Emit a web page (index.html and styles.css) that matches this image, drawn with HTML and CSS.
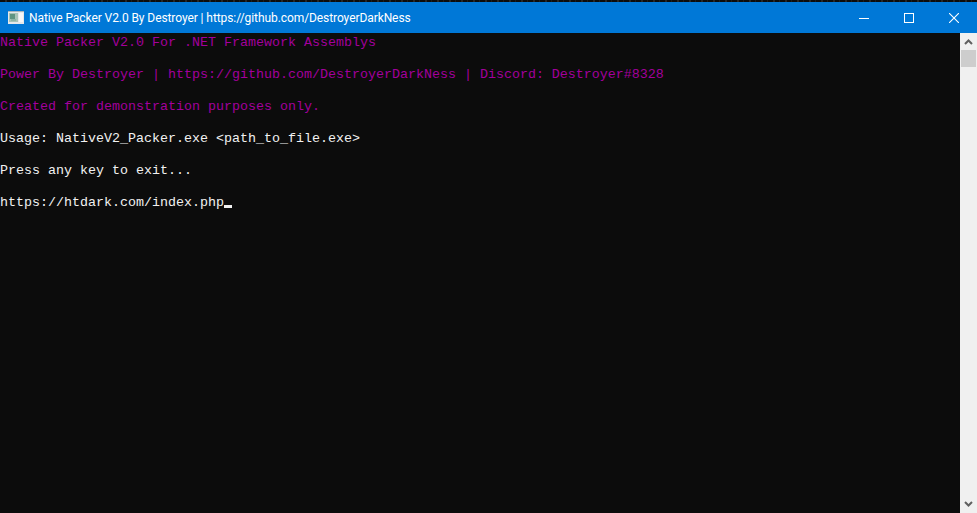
FILE: index.html
```html
<!DOCTYPE html>
<html lang="en">
<head>
<meta charset="utf-8">
<title>Native Packer V2.0</title>
<link rel="stylesheet" href="styles.css">
</head>
<body>
<div class="window">
  <header class="titlebar">
    <svg class="app-icon" width="16" height="13" viewBox="0 0 16 13">
      <rect x="0" y="0" width="16" height="13" fill="#e4e8ea"/>
      <rect x="0" y="0" width="16" height="1" fill="#a9b4bb"/>
      <rect x="1" y="2" width="9" height="9" fill="#a8c4b8"/>
      <rect x="2" y="3" width="5" height="5" fill="#5f9482"/>
      <rect x="3" y="8" width="5" height="2" fill="#8fb5a6"/>
      <rect x="11" y="2" width="4" height="9" fill="#f6f6f6"/>
    </svg>
    <span class="title">Native Packer V2.0 By Destroyer | https://github.com/DestroyerDarkNess</span>
    <div class="controls">
      <div class="ctrl"><svg width="10" height="10" viewBox="0 0 10 10"><rect x="0" y="5" width="10" height="1" fill="#fff"/></svg></div>
      <div class="ctrl"><svg width="10" height="10" viewBox="0 0 10 10"><rect x="0.5" y="0.5" width="9" height="9" fill="none" stroke="#fff"/></svg></div>
      <div class="ctrl"><svg width="10" height="10" viewBox="0 0 10 10"><path d="M0 0L10 10M10 0L0 10" stroke="#fff" stroke-width="1.1" fill="none"/></svg></div>
    </div>
  </header>
  <div class="body">
    <main class="console">
      <p class="line magenta">Native Packer V2.0 For .NET Framework Assemblys</p>
      <p class="line magenta">Power By Destroyer | https://github.com/DestroyerDarkNess | Discord: Destroyer#8328</p>
      <p class="line magenta">Created for demonstration purposes only.</p>
      <p class="line">Usage: NativeV2_Packer.exe &lt;path_to_file.exe&gt;</p>
      <p class="line">Press any key to exit...</p>
      <p class="line">https://htdark.com/index.php<span class="cursor"></span></p>
    </main>
    <aside class="scrollbar">
      <div class="arrow"><svg width="9" height="7" viewBox="0 0 9 7"><path d="M1 6L4.5 2.5L8 6" fill="none" stroke="#606060" stroke-width="2"/></svg></div>
      <div class="thumb"></div>
      <div class="track"></div>
      <div class="arrow"><svg width="9" height="7" viewBox="0 0 9 7"><path d="M1 1L4.5 4.5L8 1" fill="none" stroke="#606060" stroke-width="2"/></svg></div>
    </aside>
  </div>
</div>
</body>
</html>
```

FILE: styles.css
```css
html, body {
  margin: 0;
  padding: 0;
  height: 100%;
  overflow: hidden;
  background: #0c0c0c;
}
.window {
  display: flex;
  flex-direction: column;
  height: 513px;
  padding-top: 2px;
  box-sizing: border-box;
  background: repeating-linear-gradient(90deg, #0c0c0c 0 5px, #262626 5px 7px, #0c0c0c 7px 11px, #1c1c1c 11px 12px) top left / 100% 2px no-repeat;
}
.titlebar {
  display: flex;
  align-items: center;
  height: 31px;
  flex: none;
  background: #0078d7;
  padding-left: 8px;
}
.app-icon {
  flex: none;
  margin-right: 5px;
}
.title {
  flex: 1;
  font: 12px Roboto, sans-serif;
  letter-spacing: -0.08px;
  color: #fff;
  white-space: nowrap;
}
.controls {
  display: flex;
  height: 100%;
}
.ctrl {
  width: 45px;
  display: flex;
  align-items: center;
  justify-content: center;
}
.controls .ctrl:last-child {
  width: 46px;
}
.body {
  flex: 1;
  display: flex;
  min-height: 0;
}
.console {
  flex: 1;
  display: flex;
  flex-direction: column;
  gap: 16px;
  padding-top: 2px;
  font: 13.33px/16px "Liberation Mono", monospace;
  color: #f2f2f2;
}
.line {
  margin: 0;
  height: 16px;
  white-space: pre;
}
.magenta {
  color: #a3009c;
}
.cursor {
  display: inline-block;
  width: 8px;
  height: 3px;
  background: #f2f2f2;
  vertical-align: -2px;
}
.scrollbar {
  width: 17px;
  flex: none;
  display: flex;
  flex-direction: column;
  background: #f0f0f0;
}
.arrow {
  height: 17px;
  flex: none;
  display: flex;
  align-items: center;
  justify-content: center;
}
.thumb {
  height: 17px;
  margin: 0 1px;
  background: #cdcdcd;
  flex: none;
}
.track {
  flex: 1;
}
```
